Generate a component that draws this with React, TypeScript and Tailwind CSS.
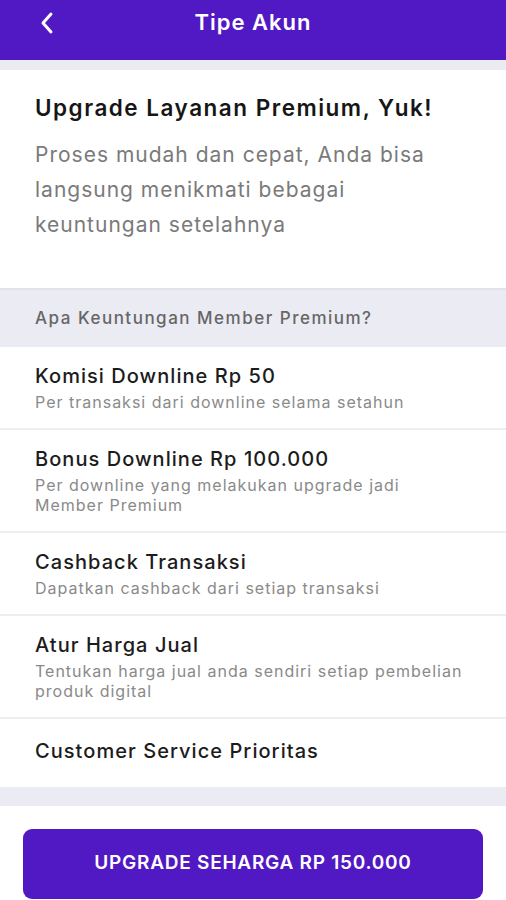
import React from "react";

const items: { title: string; sub: string[] }[] = [
  { title: "Komisi Downline Rp 50", sub: ["Per transaksi dari downline selama setahun"] },
  { title: "Bonus Downline Rp 100.000", sub: ["Per downline yang melakukan upgrade jadi", "Member Premium"] },
  { title: "Cashback Transaksi", sub: ["Dapatkan cashback dari setiap transaksi"] },
  { title: "Atur Harga Jual", sub: ["Tentukan harga jual anda sendiri setiap pembelian", "produk digital"] },
  { title: "Customer Service Prioritas", sub: [] },
];

export default function App() {
  return (
    <div className="w-[506px] h-[900px] bg-white overflow-hidden flex flex-col" style={{ fontFamily: 'Inter, "Noto Sans", sans-serif' }}>
      <header className="h-[60px] bg-[#5119c3] flex items-center relative shrink-0">
        <button className="absolute left-[34px] top-[10px] w-[26px] h-[26px] flex items-center justify-center">
          <svg width="18" height="24" viewBox="0 0 18 24" fill="none">
            <path d="M13 3 L5 12 L13 21" stroke="white" strokeWidth="3" strokeLinecap="round" strokeLinejoin="round" />
          </svg>
        </button>
        <h1 className="w-full text-center text-white text-[22px] tracking-[1px] font-semibold leading-none -mt-[16px]">Tipe Akun</h1>
      </header>
      <div className="h-[10px] bg-[#ebebf2] shrink-0" />
      <section className="h-[218px] pl-[35px] pr-[20px] pt-[24px] shrink-0">
        <h2 className="text-[22.5px] tracking-[1.5px] font-semibold text-[#161616] leading-[28px] whitespace-nowrap">Upgrade Layanan Premium, Yuk!</h2>
        <p className="mt-[15px] text-[21px] tracking-[1px] text-[#7a7a7a] leading-[35px] whitespace-nowrap">
          Proses mudah dan cepat, Anda bisa
          <br />
          langsung menikmati bebagai
          <br />
          keuntungan setelahnya
        </p>
      </section>
      <div className="h-[59px] bg-[#ebebf3] border-t-2 border-[#e2e2ea] px-[35px] flex items-center shrink-0">
        <span className="text-[17px] tracking-[1.5px] font-medium text-[#666666]">Apa Keuntungan Member Premium?</span>
      </div>
      <ul className="shrink-0">
        {items.map((it, i) => (
          <li
            key={i}
            className={`pl-[35px] pr-[20px] ${i < items.length - 1 ? "border-b-2 border-[#eeeeee]" : ""} ${it.sub.length ? "pt-[16px] pb-[16px]" : "pt-[19px] pb-[23px]"}`}
          >
            <div className="text-[20px] tracking-[1.05px] font-medium text-[#1c1c1c] leading-[26px] whitespace-nowrap">{it.title}</div>
            {it.sub.length > 0 && (
              <div className="mt-[3px] text-[16px] tracking-[1px] text-[#8a8a8a] leading-[20px] whitespace-nowrap">
                {it.sub.map((line, j) => (
                  <div key={j}>{line}</div>
                ))}
              </div>
            )}
          </li>
        ))}
      </ul>
      <div className="h-[19px] bg-[#ebebf3] shrink-0" />
      <div className="px-[23px] pt-[23px]">
        <button className="w-full h-[70px] rounded-[9px] bg-[#5119c3] text-white text-[19px] tracking-[0.75px] font-semibold pb-[2px]">
          UPGRADE SEHARGA RP 150.000
        </button>
      </div>
    </div>
  );
}
